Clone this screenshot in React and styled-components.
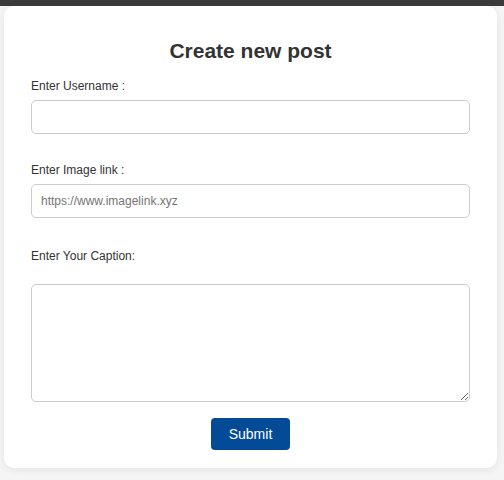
import React, { useState } from 'react';
import styled, { createGlobalStyle } from 'styled-components';

const GlobalStyle = createGlobalStyle`
    html, body {
        margin: 0;
        padding: 0;
        background: #f5f5f5;
        font-family: 'Liberation Sans', Arial, sans-serif;
    }
`;

const TopBar = styled.div`
    height: 6px;
    background: #3b3b3b;
`;

const Page = styled.div`
    padding: 0 7px 12px 4px;
`;

const Card = styled.form`
    background: #ffffff;
    border-radius: 10px;
    box-shadow: 0 2px 8px rgba(0, 0, 0, 0.08);
    padding: 33px 27px 18px 27px;
    display: flex;
    flex-direction: column;
`;

const Title = styled.h1`
    margin: 0 0 16px 0;
    text-align: center;
    font-size: 21px;
    font-weight: bold;
    color: #333333;
    line-height: 24px;
`;

const Label = styled.label`
    display: block;
    font-size: 12px;
    line-height: 14px;
    color: #333333;
    margin-bottom: ${props => props.$gap || 7}px;
`;

const Field = styled.div`
    margin-bottom: ${props => props.$space || 29}px;
`;

const Input = styled.input`
    box-sizing: border-box;
    width: 100%;
    height: 34px;
    border: 1px solid #cccccc;
    border-radius: 5px;
    padding: 0 9px;
    font-size: 12px;
    font-family: inherit;
    color: #333333;
    outline: none;

    &::placeholder {
        color: #757575;
    }
`;

const TextArea = styled.textarea`
    box-sizing: border-box;
    display: block;
    width: 100%;
    height: 118px;
    border: 1px solid #cccccc;
    border-radius: 5px;
    padding: 8px 9px;
    font-size: 12px;
    font-family: inherit;
    resize: vertical;
    outline: none;
`;

const SubmitButton = styled.button`
    align-self: center;
    width: 79px;
    height: 32px;
    border: none;
    border-radius: 4px;
    background: #034b96;
    color: #ffffff;
    font-size: 14px;
    font-family: inherit;
    cursor: pointer;
`;

const App = () => {
    const [data, setData] = useState({ username: "", image: "", caption: "" });

    function handleUserInput(e) {
        const { name, value } = e.target;
        setData({ ...data, [name]: value });
    }

    return (
        <>
            <GlobalStyle />
            <TopBar />
            <Page>
                <Card onSubmit={e => e.preventDefault()}>
                    <Title>Create new post</Title>
                    <Field>
                        <Label>Enter Username :</Label>
                        <Input name="username" value={data.username} onChange={handleUserInput} />
                    </Field>
                    <Field $space={31}>
                        <Label>Enter Image link :</Label>
                        <Input
                            name="image"
                            value={data.image}
                            onChange={handleUserInput}
                            placeholder="https://www.imagelink.xyz"
                        />
                    </Field>
                    <Field $space={16}>
                        <Label $gap={21}>Enter Your Caption:</Label>
                        <TextArea name="caption" value={data.caption} onChange={handleUserInput} />
                    </Field>
                    <SubmitButton type="submit">Submit</SubmitButton>
                </Card>
            </Page>
        </>
    );
};

export default App;
